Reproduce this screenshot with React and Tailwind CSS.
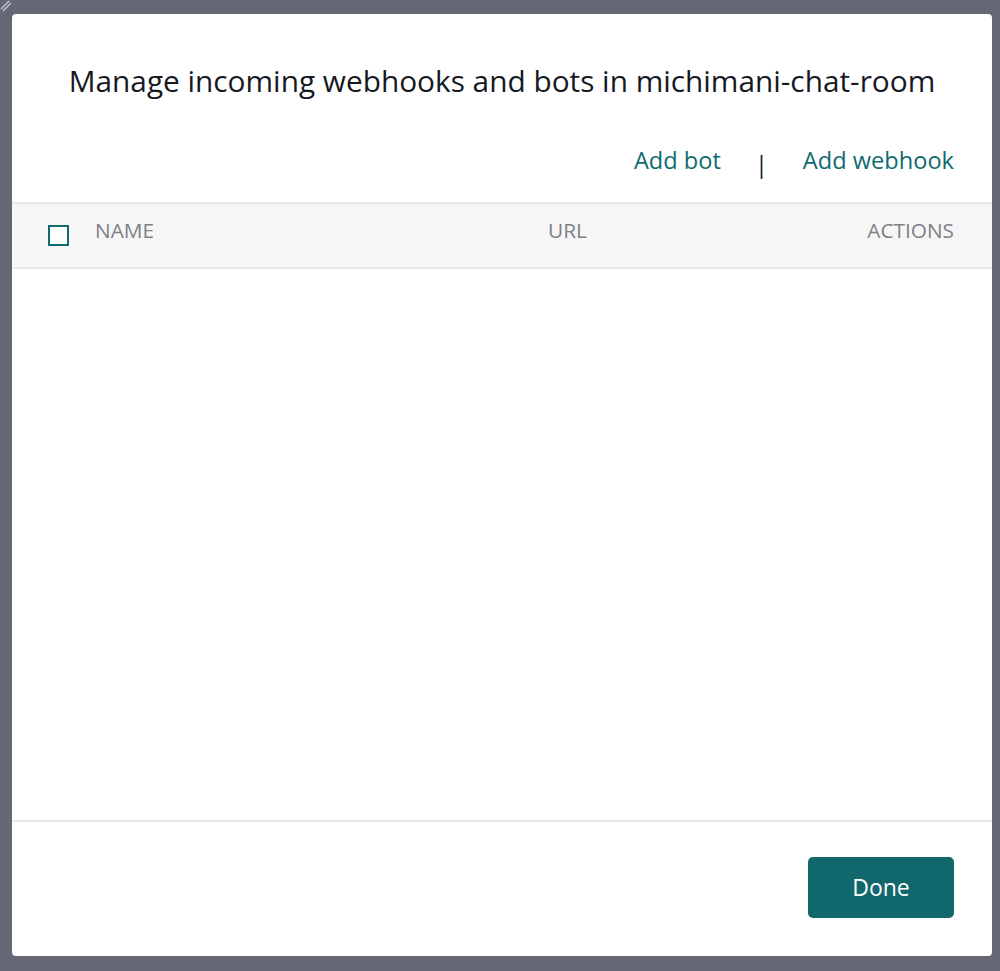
import React from 'react';

export default function App() {
  const font = { fontFamily: '"Open Sans", "Noto Sans", sans-serif' };
  return (
    <div className="relative h-[971px] w-[1000px] bg-[#656874] pt-[14px] pl-[12px]" style={font}>
      {/* resize grip */}
      <svg className="absolute left-0 top-0" width="12" height="12" viewBox="0 0 12 12">
        <path d="M1 9 L9 1 M3 11 L11 3" stroke="#c8cad0" strokeWidth="1.2" />
      </svg>

      <div className="flex h-[942px] w-[980px] flex-col rounded-[4px] bg-white">
        <h1 className="pt-[49px] text-center text-[29.8px] leading-[36px] text-[#16191f]">
          Manage incoming webhooks and bots in michimani-chat-room
        </h1>

        <div className="mt-[42px] flex h-[40px] items-center justify-end pr-[38px] text-[23.6px] text-[#0f6b6f]">
          <button>Add bot</button>
          <span className="ml-[34px] mr-[35px] mt-[8px] text-[#16191f]">|</span>
          <button>Add webhook</button>
        </div>

        <div className="mt-[21px] flex h-[67px] items-center border-y-2 border-[#e8e8ea] bg-[#f6f6f6] pr-[38px] text-[20.8px] uppercase text-[#7d7f87]">
          <div className="ml-[36px] h-[21px] w-[21px] border-2 border-[#0f6b6f] bg-white" />
          <div className="mb-[9px] flex flex-1 items-center">
            <span className="ml-[26px] w-[453px]">Name</span>
            <span className="flex-1">URL</span>
            <span>Actions</span>
          </div>
        </div>

        <div className="flex-1" />

        <div className="flex h-[136px] items-start justify-end border-t-2 border-[#e8e8ea] pr-[38px] pt-[35px]">
          <button className="h-[61px] w-[146px] rounded-[5px] bg-[#10686c] text-[23px] text-white">
            Done
          </button>
        </div>
      </div>
    </div>
  );
}
